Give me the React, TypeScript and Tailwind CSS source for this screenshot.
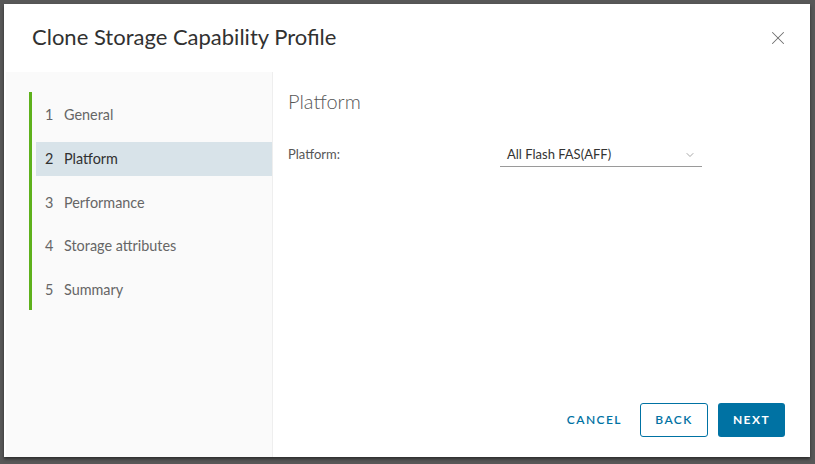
import { X, ChevronDown } from 'lucide-react'

const steps = ['General', 'Platform', 'Performance', 'Storage attributes', 'Summary']

export default function App() {
  const active = 1

  return (
    <div className="h-[464px] w-[815px] bg-[#585858] pl-[4px] pt-[4px] font-['Lato',sans-serif]">
      <div className="flex h-[453px] w-[806px] flex-col bg-white shadow-[0_2px_3px_rgba(0,0,0,0.5)]">
        {/* header */}
        <div className="flex h-[68px] items-center justify-between pb-[4px] pl-[28px] pr-[21px]">
          <h1 className="text-[22px] font-normal text-[#313131]">Clone Storage Capability Profile</h1>
          <X className="mt-[4px] h-[22px] w-[22px] text-[#6e6e6e]" strokeWidth={1.1} />
        </div>

        <div className="flex min-h-0 flex-1">
          {/* steps sidebar */}
          <div className="ml-[2px] w-[267px] border-r border-[#eeeeee] bg-[#fafafa] pt-[20px] pl-[23px]">
            <div className="flex flex-col gap-[9.75px] border-l-[3px] border-[#5eb11c] pt-[6px] pb-[3px] pl-[4px]">
              {steps.map((s, i) => (
                <div
                  key={s}
                  className={`flex h-[34px] items-center pl-[9px] text-[14.4px] ${
                    i === active ? 'bg-[#d8e3e9] text-[#313131]' : 'text-[#666666]'
                  }`}
                >
                  <span className="w-[19px]">{i + 1}</span>
                  <span>{s}</span>
                </div>
              ))}
            </div>
          </div>

          {/* content */}
          <div className="flex flex-1 flex-col pl-[15px] pr-[25px] pb-[20px]">
            <h2 className="mt-[14px] text-[20px] font-light text-[#565656]">Platform</h2>
            <div className="mt-[27px] flex items-center">
              <label className="w-[212px] text-[13px] text-[#565656]">Platform:</label>
              <div className="flex h-[24px] w-[202px] items-center justify-between border-b border-[#9a9a9a] pl-[7px] pr-[6px] text-[13px] text-[#333333]">
                <span>All Flash FAS(AFF)</span>
                <ChevronDown className="h-[12px] w-[12px] text-[#8a8a8a]" strokeWidth={1.5} />
              </div>
            </div>

            <div className="mt-auto flex items-center justify-end">
              <button className="mr-[6px] h-[34px] px-[12px] text-[12px] font-semibold tracking-[0.12em] text-[#0072a3]">
                CANCEL
              </button>
              <button className="mr-[10px] h-[34px] w-[68px] rounded-[3px] border border-[#0072a3] text-[12px] font-semibold tracking-[0.12em] text-[#0072a3]">
                BACK
              </button>
              <button className="h-[34px] w-[67px] rounded-[3px] bg-[#0072a3] text-[12px] font-bold tracking-[0.12em] text-white">
                NEXT
              </button>
            </div>
          </div>
        </div>
      </div>
    </div>
  )
}
